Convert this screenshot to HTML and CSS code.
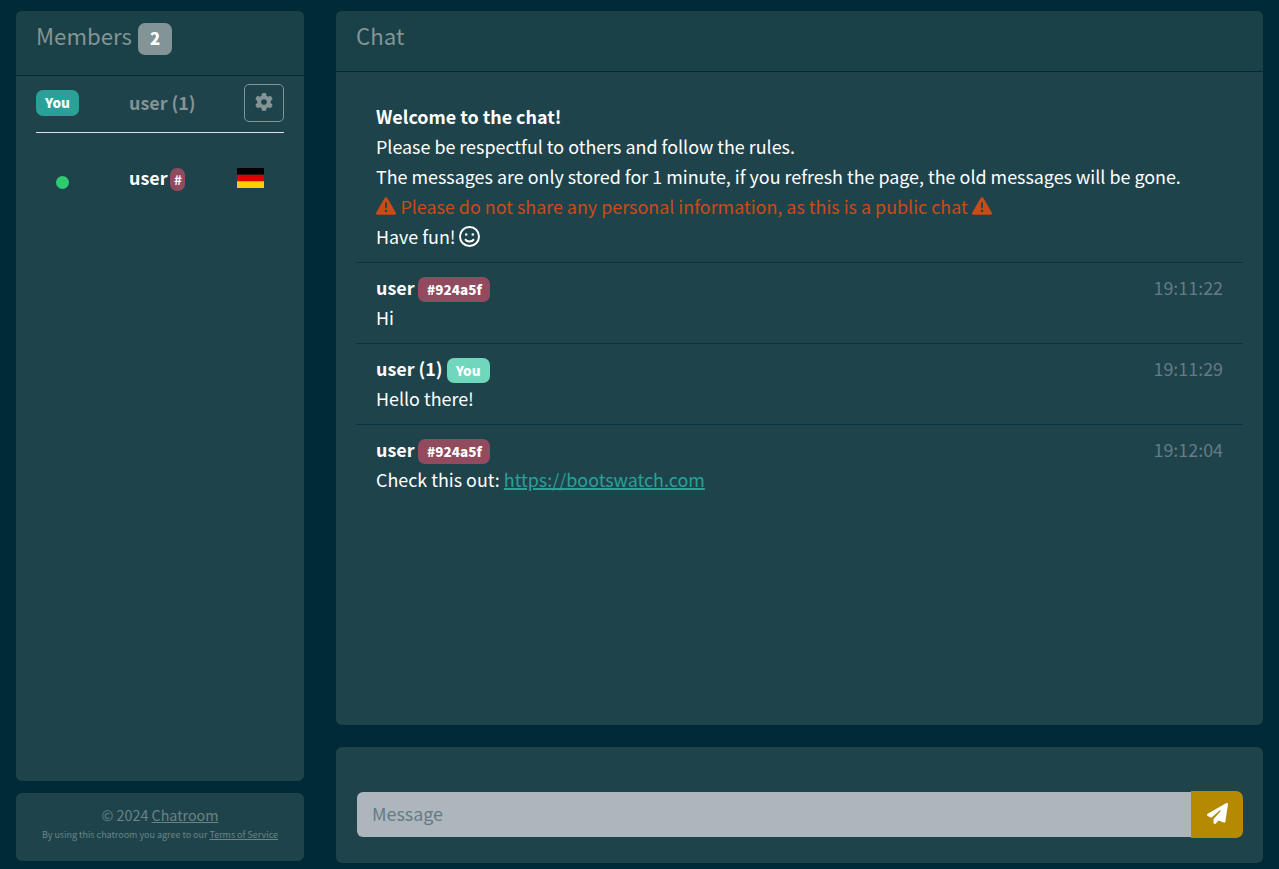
FILE: index.html
```html
<!DOCTYPE html>
<html lang="en">
<head>
<meta charset="utf-8">
<title>Chatroom</title>
<link rel="stylesheet" href="styles.css">
</head>
<body>
<div class="app">
  <aside class="side">
    <section class="card members">
      <header class="card-header"><h4 class="title">Members</h4><span class="badge count">2</span></header>
      <div class="self">
        <span class="badge you">You</span>
        <strong class="text self-name">user (1)</strong>
        <button class="settings" aria-label="Settings"><svg class="gear" viewBox="0 0 512 512"><path d="M495.9 166.6c3.2 8.700.6 18.300-6.200 24.600l-43.300 39.400c1.100 8.300 1.700 16.800 1.700 25.400s-.6 17.100-1.700 25.400l43.300 39.400c6.900 6.200 9.600 15.900 6.400 24.600c-4.400 11.900-9.700 23.300-15.800 34.300l-4.700 8.100c-6.600 11-14 21.400-22.100 31.200c-5.900 7.200-15.700 9.600-24.500 6.800l-55.700-17.700c-13.400 10.300-28.200 18.900-44 25.400l-12.500 57.100c-2 9.100-9 16.300-18.200 17.800c-13.800 2.300-28 3.500-42.500 3.500s-28.700-1.200-42.500-3.500c-9.200-1.500-16.200-8.700-18.200-17.800l-12.500-57.100c-15.800-6.500-30.600-15.100-44-25.400L83.100 425.900c-8.800 2.800-18.600 .3-24.500-6.800c-8.100-9.800-15.500-20.200-22.100-31.200l-4.700-8.100c-6.100-11-11.400-22.400-15.800-34.300c-3.200-8.700-.5-18.400 6.400-24.600l43.300-39.400C64.600 273.100 64 264.600 64 256s.6-17.100 1.700-25.400L22.400 191.200c-6.900-6.200-9.600-15.900-6.400-24.600c4.400-11.900 9.700-23.300 15.800-34.300l4.700-8.100c6.600-11 14-21.400 22.100-31.200c5.900-7.200 15.700-9.600 24.500-6.800l55.700 17.700c13.400-10.300 28.200-18.900 44-25.400l12.500-57.100c2-9.100 9-16.300 18.200-17.800C227.300 1.200 241.500 0 256 0s28.700 1.200 42.500 3.500c9.200 1.500 16.200 8.700 18.200 17.800l12.500 57.100c15.800 6.500 30.600 15.100 44 25.400l55.700-17.700c8.800-2.800 18.600-.3 24.500 6.800c8.100 9.800 15.500 20.200 22.100 31.200l4.700 8.100c6.100 11 11.400 22.400 15.800 34.300zM256 336a80 80 0 1 0 0-160 80 80 0 1 0 0 160z"/></svg></button>
      </div>
      <div class="member">
        <span class="online"></span>
        <span class="member-name"><strong class="text">user</strong><span class="tag">#</span></span>
        <svg class="flag" viewBox="0 0 27 20"><path d="M0 0h27v6.670H0z"/><path fill="#d00" d="M0 6.670h27v6.670H0z"/><path fill="#ffce00" d="M0 13.330h27V20H0z"/></svg>
      </div>
    </section>
    <footer class="card footer">
      <div class="copy">© 2024 <a href="#">Chatroom</a></div>
      <div class="terms">By using this chatroom you agree to our <a href="#">Terms of Service</a></div>
    </footer>
  </aside>
  <main class="main">
    <section class="card chat">
      <header class="card-header"><h4 class="title">Chat</h4></header>
      <ul class="messages">
        <li class="message">
          <strong class="line">Welcome to the chat!</strong>
          <div class="line">Please be respectful to others and follow the rules.</div>
          <div class="line">The messages are only stored for 1 minute, if you refresh the page, the old messages will be gone.</div>
          <div class="line warning"><svg class="icon" viewBox="0 0 512 512"><path d="M256 32c14.200 0 27.300 7.500 34.500 19.800l216 368c7.300 12.400 7.300 27.700 .2 40.100S486.300 480 472 480H40c-14.300 0-27.600-7.700-34.700-20.100s-7-27.800 .2-40.100l216-368C228.700 39.500 241.800 32 256 32zm0 128c-13.300 0-24 10.700-24 24V296c0 13.300 10.700 24 24 24s24-10.700 24-24V184c0-13.300-10.700-24-24-24zm32 224a32 32 0 1 0-64 0 32 32 0 1 0 64 0z"/></svg><span class="text">Please do not share any personal information, as this is a public chat</span><svg class="icon" viewBox="0 0 512 512"><path d="M256 32c14.200 0 27.300 7.500 34.500 19.800l216 368c7.300 12.400 7.300 27.700 .2 40.100S486.300 480 472 480H40c-14.300 0-27.600-7.700-34.700-20.100s-7-27.800 .2-40.100l216-368C228.700 39.500 241.800 32 256 32zm0 128c-13.300 0-24 10.700-24 24V296c0 13.300 10.700 24 24 24s24-10.700 24-24V184c0-13.300-10.700-24-24-24zm32 224a32 32 0 1 0-64 0 32 32 0 1 0 64 0z"/></svg></div>
          <div class="line fun"><span class="text">Have fun!</span><svg class="icon smile" viewBox="0 0 512 512"><path d="M464 256A208 208 0 1 0 48 256a208 208 0 1 0 416 0zM0 256a256 256 0 1 1 512 0A256 256 0 1 1 0 256zm177.600 62.100C192.800 334.500 218.800 352 256 352s63.200-17.500 78.400-33.900c9-9.700 24.200-10.400 33.900-1.400s10.400 24.200 1.400 33.900c-22 23.800-60 49.400-113.600 49.400s-91.700-25.500-113.600-49.400c-9-9.700-8.400-24.900 1.400-33.900s24.900-8.400 33.900 1.400zM144.400 208a32 32 0 1 1 64 0 32 32 0 1 1-64 0zm192-32a32 32 0 1 1 0 64 32 32 0 1 1 0-64z"/></svg></div>
        </li>
        <li class="message">
          <div class="line head"><strong class="text">user</strong><span class="badge color">#924a5f</span><time class="text">19:11:22</time></div>
          <div class="line">Hi</div>
        </li>
        <li class="message">
          <div class="line head"><strong class="text">user (1)</strong><span class="badge mine">You</span><time class="text">19:11:29</time></div>
          <div class="line">Hello there!</div>
        </li>
        <li class="message">
          <div class="line head"><strong class="text">user</strong><span class="badge color">#924a5f</span><time class="text">19:12:04</time></div>
          <div class="line">Check this out: <a class="link" href="#">https://bootswatch.com</a></div>
        </li>
      </ul>
    </section>
    <form class="card composer">
      <input class="input" type="text" placeholder="Message">
      <button class="send" type="button" aria-label="Send"><svg viewBox="0 0 512 512"><path d="M498.100 5.600c10.100 7 15.400 19.100 13.500 31.200l-64 416c-1.500 9.700-7.400 18.200-16 23s-18.900 5.400-28 1.600L284 427.700l-68.500 74.100c-8.900 9.700-22.900 12.900-35.200 8.100S160 493.200 160 480V396.400c0-4 1.500-7.800 4.200-10.700L331.800 202.800c5.800-6.300 5.600-16-.4-22s-15.700-6.400-22-.7L106 360.800 17.700 316.600C7.100 311.300 .3 300.700 0 288.900s5.900-22.800 16.100-28.700l448-256c10.700-6.100 23.900-5.500 34 1.400z"/></svg></button>
    </form>
  </main>
</div>
</body>
</html>
```
FILE: styles.css
```css
* { box-sizing: border-box; }
body {
  margin: 0;
  background: #002b36;
  color: #fff;
  font: 17.9px/28px "Noto Sans CJK JP", "Noto Sans CJK SC", sans-serif;
}
svg { display: block; flex: none; fill: currentColor; }
.app { display: flex; gap: 32px; height: 869px; padding: 11px 16px 0; }
.side { display: flex; flex-direction: column; gap: 12px; width: 288px; }
.main { display: flex; flex-direction: column; gap: 22px; flex: 1; min-width: 0; }
.card { background: #1f434b; border-radius: 6px; overflow: hidden; }
.members { height: 770px; }
.footer { height: 68px; padding-top: 10px; text-align: center; color: #6b8385; white-space: nowrap; }
.footer a { color: inherit; }
.copy { font-size: 14.3px; line-height: 24px; }
.terms { font-size: 8.97px; line-height: 15px; }
.chat { height: 714px; }
.card-header {
  display: flex;
  align-items: flex-start;
  gap: 6px;
  height: 61px;
  padding: 10px 20px 0;
  background: #1a4048;
  border-bottom: 1px solid #002b36;
}
.members .card-header { height: 65px; }
.title { margin: 0; font-size: 22.25px; line-height: 28px; font-weight: 400; color: #839496; }
.badge { border-radius: 7px; font-size: 13.5px; font-weight: 900; text-align: center; color: #fff; }
.count { width: 34px; height: 32px; margin-top: 2px; font-size: 16.8px; line-height: 31px; background: #839496; }
.self {
  display: grid;
  grid-template-columns: 93px 1fr 40px;
  align-items: center;
  height: 57px;
  margin: 0 20px;
  border-bottom: 1px solid #dee2e6;
}
.you { width: 43px; height: 26px; margin-top: -2px; line-height: 25px; background: #2aa198; }
.text { height: 30px; }
.self-name { margin-top: -2px; color: #839496; }
.settings {
  display: grid;
  place-items: center;
  width: 40px;
  height: 38px;
  margin-top: -2px;
  padding: 0 0 2px;
  background: none;
  border: 1px solid #839496;
  border-radius: 5px;
  color: #839496;
}
.gear { width: 18px; height: 18px; }
.member { display: grid; grid-template-columns: 73px 108px 27px; align-items: center; margin: 30px 40px 0; }
.online { width: 13px; height: 13px; margin-top: 8px; border-radius: 50%; background: #2ecc71; }
.member-name { display: flex; align-items: center; gap: 3px; }
.tag { width: 15px; height: 23px; margin-top: 2px; border-radius: 7px; background: #924a5f; font-size: 13.4px; line-height: 23px; font-weight: 700; text-align: center; }
.flag { width: 27px; height: 20px; color: #000; }
.messages { margin: 0; padding: 20px; list-style: none; }
.message { padding: 10px 20px; border-bottom: 1px solid #073642; }
.message:last-child { border-bottom: 0; }
.line { display: block; height: 30px; white-space: nowrap; }
.warning, .fun, .head { display: flex; align-items: center; gap: 4px; }
.warning { gap: 4.4px; color: #cb4b16; }
.fun { gap: 3.5px; }
.icon { width: 20px; height: 20px; margin-bottom: 2px; }
.smile { width: 21px; height: 21px; }
.color, .mine { height: 25px; line-height: 25px; margin-top: 2px; }
.color { width: 72px; background: #924a5f; }
.mine { width: 43px; background: #6fd7bb; }
time { margin-left: auto; color: #657b83; }
.link { color: #2aa198; text-decoration-thickness: 2px; }
.composer { display: flex; align-items: center; height: 116px; padding: 19px 20px 0 21px; }
.input {
  flex: 1;
  min-width: 0;
  height: 45px;
  padding: 0 15px 3px;
  border: 0;
  border-radius: 6px 0 0 6px;
  background: #adb5bd;
  font: inherit;
}
.input::placeholder { color: #657b83; opacity: 1; }
.send {
  display: grid;
  place-items: center;
  width: 52px;
  height: 47px;
  padding: 0 0 2px;
  border: 0;
  border-radius: 0 7px 7px 0;
  background: #b58900;
  color: #fff;
}
.send svg { width: 21px; height: 21px; }
```
